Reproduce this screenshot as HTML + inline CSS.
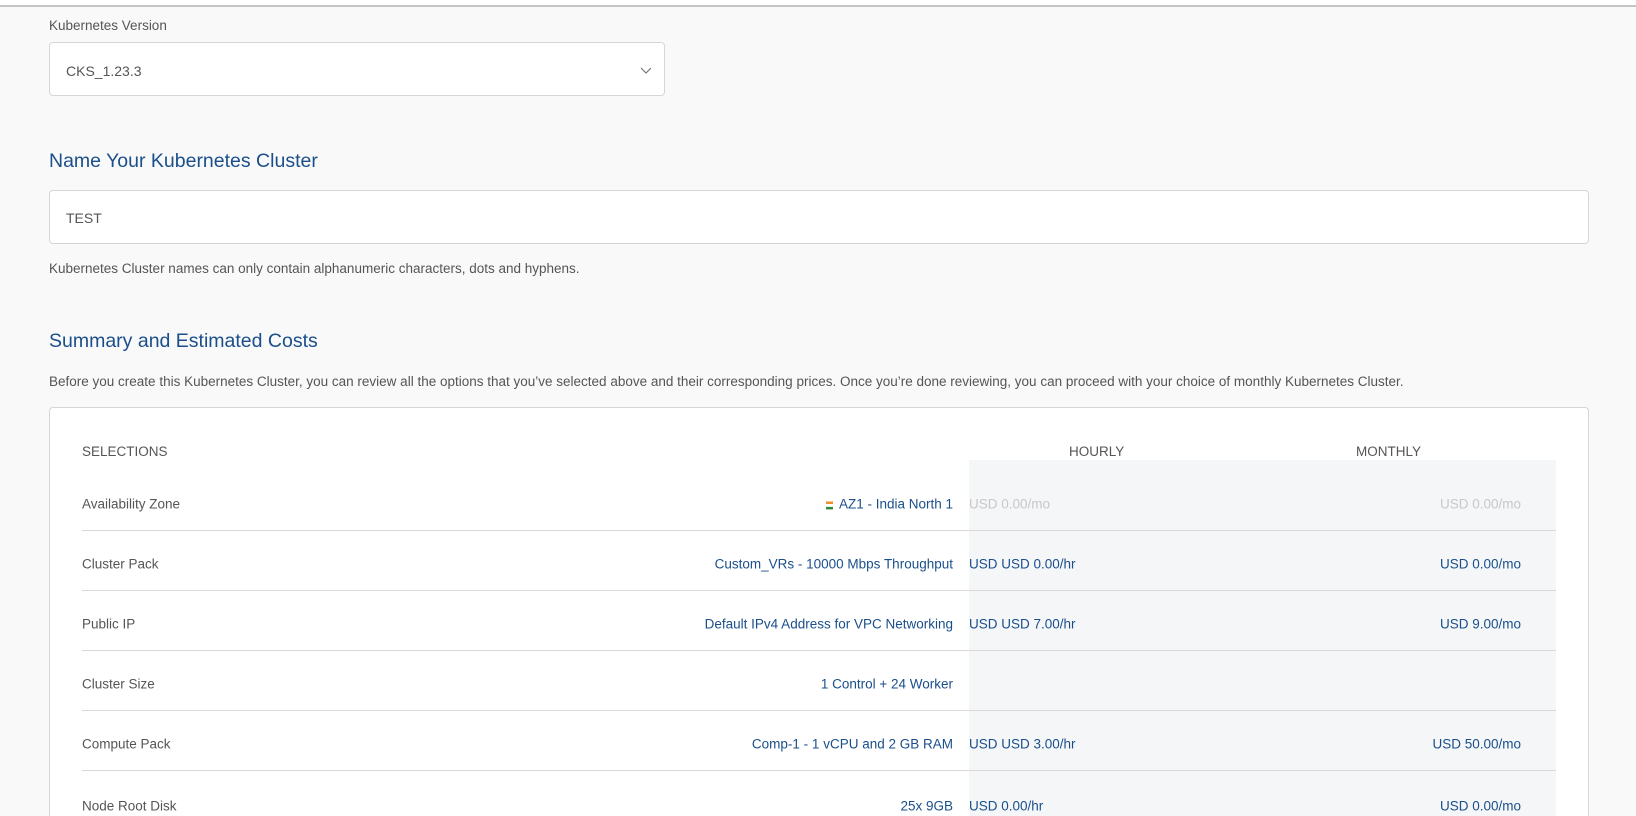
<!DOCTYPE html>
<html style="width:1636px;height:816px;overflow:hidden"><head><meta charset="utf-8"><style>
*{box-sizing:border-box;margin:0;padding:0}
body{width:1636px;height:816px;overflow:hidden;background:#f9f9f9;font-family:"Liberation Sans",sans-serif;color:#555;position:relative}
.abs{position:absolute;white-space:nowrap}
.topline{position:absolute;left:0;top:0;width:1636px;height:7px;border-bottom:2px solid #c4c4c4;background:#fff}
.lbl{font-size:13.5px;color:#555}
.box{position:absolute;background:#fff;border:1px solid #d6d6d6;border-radius:4px}
h2{position:absolute;font-weight:normal;font-size:19.5px;color:#1a4f8b;white-space:nowrap}
.blue{color:#1a4f8b}
.row{position:absolute;left:82px;width:1474px;height:60px;border-bottom:1px solid #d9d9d9;font-size:13.5px}
.row span{position:absolute;top:50%;transform:translateY(-50%);margin-top:3px;white-space:nowrap}
</style></head><body>
<div class="topline"></div>
<div class="abs lbl" style="left:49px;top:18px">Kubernetes Version</div>
<div class="box" style="left:49px;top:42px;width:616px;height:54px">
  <div class="abs" style="left:16px;top:20px;font-size:14px;color:#555">CKS_1.23.3</div>
  <svg class="abs" style="left:590px;top:22px" width="12" height="10" viewBox="0 0 12 10"><path d="M1 3l5 5 5-5" fill="none" stroke="#777" stroke-width="1.2"/></svg>
</div>
<h2 style="left:49px;top:150px">Name Your Kubernetes Cluster</h2>
<div class="box" style="left:49px;top:190px;width:1540px;height:54px">
  <div class="abs" style="left:16px;top:19px;font-size:14px;color:#555">TEST</div>
</div>
<div class="abs lbl" style="left:49px;top:261px">Kubernetes Cluster names can only contain alphanumeric characters, dots and hyphens.</div>
<h2 style="left:49px;top:330px">Summary and Estimated Costs</h2>
<div class="abs lbl" style="left:49px;top:374px">Before you create this Kubernetes Cluster, you can review all the options that you’ve selected above and their corresponding prices. Once you’re done reviewing, you can proceed with your choice of monthly Kubernetes Cluster.</div>
<div class="box" style="left:49px;top:407px;width:1540px;height:412px;border-radius:4px 4px 0 0"></div>
<div class="abs" style="left:969px;top:460px;width:587px;height:356px;background:#f5f6f8"></div>
<div class="abs lbl" style="left:82px;top:444px">SELECTIONS</div>
<div class="abs lbl" style="left:1069px;top:444px">HOURLY</div>
<div class="abs lbl" style="left:1356px;top:444px">MONTHLY</div>

<div class="row" style="top:471px"><span style="left:0">Availability Zone</span>
<span style="right:603px" class="blue"><svg width="7" height="8" style="vertical-align:-1px;margin-right:6px"><rect y="0" width="7" height="2.5" fill="#f08c2a"/><rect y="2.7" width="7" height="2.5" fill="#fff"/><rect y="5.4" width="7" height="2.5" fill="#2e8b3a"/></svg>AZ1 - India North 1</span>
<span style="left:887px;color:#c8c8c8">USD 0.00/mo</span><span style="right:35px;color:#c8c8c8">USD 0.00/mo</span></div>
<div class="row" style="top:531px"><span style="left:0">Cluster Pack</span><span style="right:603px" class="blue">Custom_VRs - 10000 Mbps Throughput</span>
<span style="left:887px" class="blue">USD USD 0.00/hr</span><span style="right:35px" class="blue">USD 0.00/mo</span></div>
<div class="row" style="top:591px"><span style="left:0">Public IP</span><span style="right:603px" class="blue">Default IPv4 Address for VPC Networking</span>
<span style="left:887px" class="blue">USD USD 7.00/hr</span><span style="right:35px" class="blue">USD 9.00/mo</span></div>
<div class="row" style="top:651px"><span style="left:0">Cluster Size</span><span style="right:603px" class="blue">1 Control + 24 Worker</span></div>
<div class="row" style="top:711px"><span style="left:0">Compute Pack</span><span style="right:603px" class="blue">Comp-1 - 1 vCPU and 2 GB RAM</span>
<span style="left:887px" class="blue">USD USD 3.00/hr</span><span style="right:35px" class="blue">USD 50.00/mo</span></div>
<div class="row" style="top:771px;height:45px;border-bottom:none"><span style="left:0;top:32px">Node Root Disk</span><span style="right:603px;top:32px" class="blue">25x 9GB</span>
<span style="left:887px;top:32px" class="blue">USD 0.00/hr</span><span style="right:35px;top:32px" class="blue">USD 0.00/mo</span></div>
</body></html>
